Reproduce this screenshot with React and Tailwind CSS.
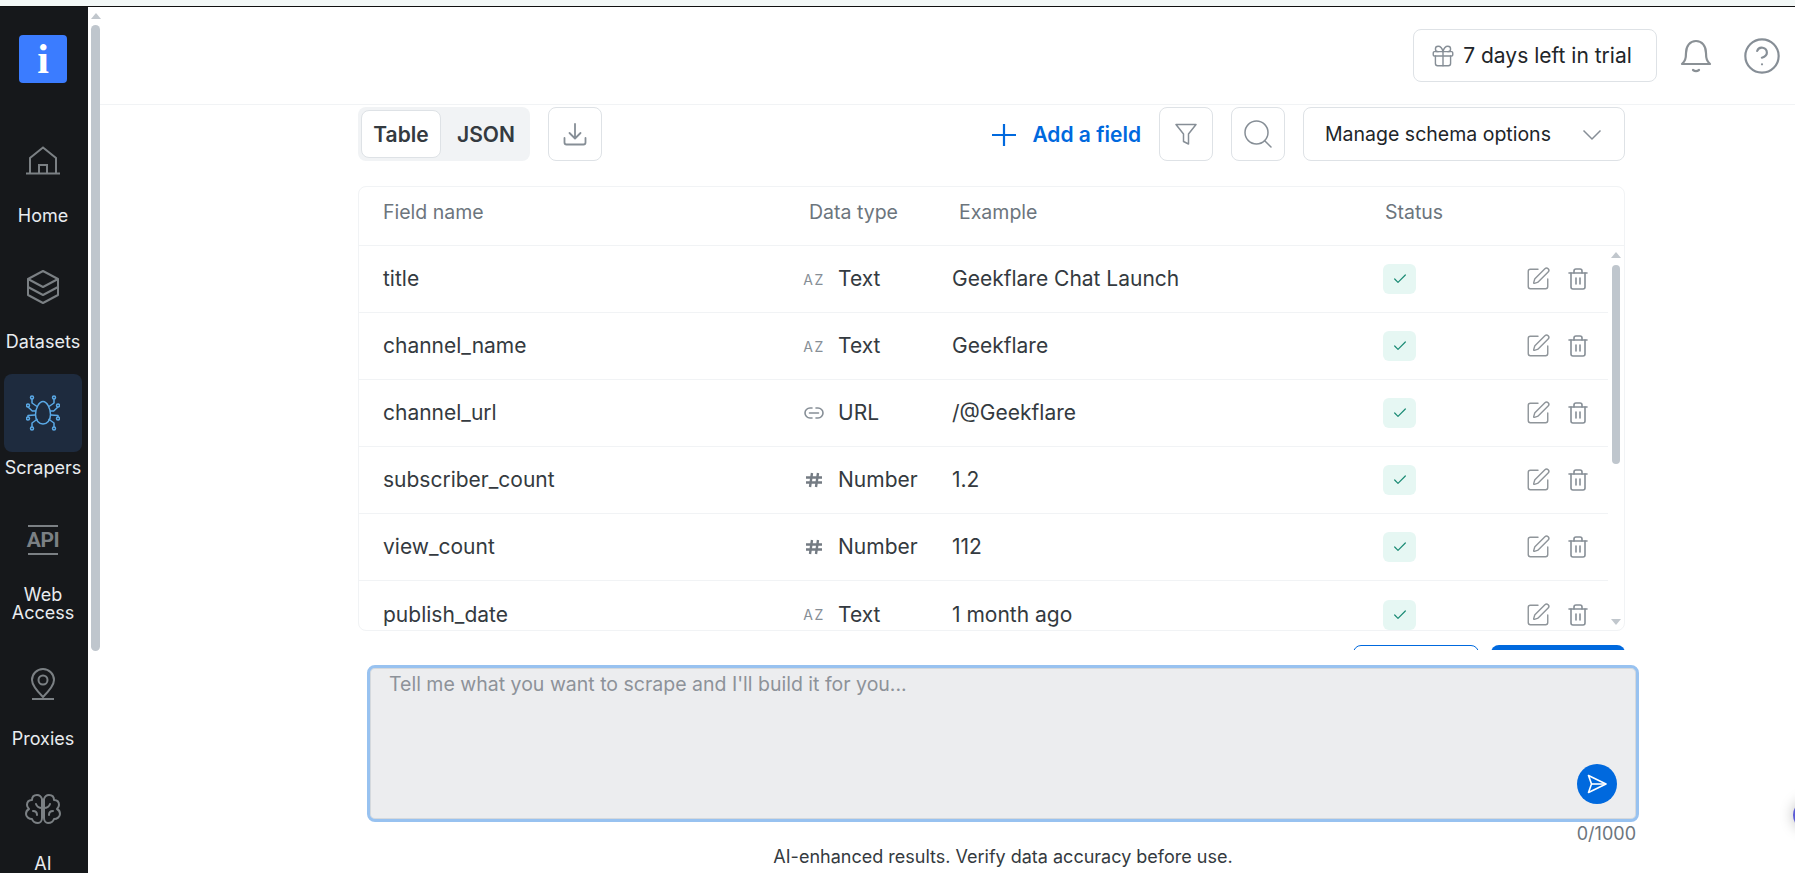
import { Gift, CircleHelp, SquarePen, Trash2, Check } from "lucide-react";

const rows = [
  { name: "title", type: "Text", kind: "az", example: "Geekflare Chat Launch" },
  { name: "channel_name", type: "Text", kind: "az", example: "Geekflare" },
  { name: "channel_url", type: "URL", kind: "url", example: "/@Geekflare" },
  { name: "subscriber_count", type: "Number", kind: "num", example: "1.2" },
  { name: "view_count", type: "Number", kind: "num", example: "112" },
  { name: "publish_date", type: "Text", kind: "az", example: "1 month ago" },
];

const HomeIcon = () => (
  <svg width="34" height="30" viewBox="0 0 34 30" fill="none" stroke="#7b8084" strokeWidth="2">
    <path d="M4 27V12L17 1.5 30 12v15" />
    <path d="M0 27.5h34" />
    <path d="M13 27v-8h8v8" />
  </svg>
);

const DatasetsIcon = () => (
  <svg width="34" height="36" viewBox="0 0 34 36" fill="none" stroke="#7b8084" strokeWidth="2" strokeLinejoin="round">
    <path d="M17 2l15 8v16l-15 8-15-8V10z" />
    <path d="M2 10l15 8 15-8" />
    <path d="M2 18l15 8 15-8" />
  </svg>
);

const SpiderIcon = () => (
  <svg width="34" height="36" viewBox="0 0 34 36" fill="none" stroke="#5aa9e6" strokeWidth="1.5" strokeLinejoin="round">
    <path d="M17 6.5c4 0 7.5 7 7.5 13 0 6-3.5 9.5-7.5 9.5s-7.5-3.5-7.5-9.5c0-6 3.5-13 7.5-13z" />
    <path d="M6 4v4l5 3.5M28 4v4l-5 3.5" />
    <path d="M2 12l4.3 4H10M32 12l-4.3 4H24" />
    <path d="M2 22v-1.5L9 20M32 22v-1.5L25 20" />
    <path d="M6 32v-4l5.5-4M28 32v-4l-5.5-4" />
    <circle cx="6" cy="2.5" r="1.5" />
    <circle cx="28" cy="2.5" r="1.5" />
    <circle cx="2" cy="10.5" r="1.5" />
    <circle cx="32" cy="10.5" r="1.5" />
    <circle cx="2" cy="23.5" r="1.5" />
    <circle cx="32" cy="23.5" r="1.5" />
    <circle cx="6" cy="33.5" r="1.5" />
    <circle cx="28" cy="33.5" r="1.5" />
  </svg>
);

const ApiIcon = () => (
  <div className="flex h-[30px] w-[30px] items-center justify-center border-y-2 border-[#7b8084]">
    <span className="font-['Roboto',sans-serif] text-[21px] leading-none font-bold tracking-[-0.5px] text-[#7b8084]">API</span>
  </div>
);

const PinIcon = () => (
  <svg width="24" height="32" viewBox="0 0 24 32" fill="none" stroke="#7b8084" strokeWidth="2">
    <path d="M12 29C5 22 1 17 1 12a11 11 0 0 1 22 0c0 5-4 10-11 17z" />
    <circle cx="12" cy="12" r="4.5" />
    <path d="M1 31h22" />
  </svg>
);

const BrainIcon = () => (
  <svg width="36" height="30" viewBox="0 0 36 30" fill="none" stroke="#7b8084" strokeWidth="2" strokeLinecap="round" strokeLinejoin="round">
    <path d="M17 5C16 2 14 1 12 1 9 1 7 3 7 6 4 6 2 8 2 11c0 2 1 3 2 4-2 1-3 3-3 5 0 3 3 5 6 5 1 3 4 4 6 4 2 0 4-2 4-5z" />
    <path d="M19 5c1-3 3-4 5-4 3 0 5 2 5 5 3 0 5 2 5 5 0 2-1 3-2 4 2 1 3 3 3 5 0 3-3 5-6 5-1 3-4 4-6 4-2 0-4-2-4-5z" />
    <path d="M17 14c-2 0-5-1-6-4M19 14c2 0 5-1 6-4M8 17c2 0 4 1 4 4M28 17c-2 0-4 1-4 4" />
  </svg>
);

const BellIcon = () => (
  <svg width="32" height="36" viewBox="0 0 32 36" fill="none" stroke="#8a9095" strokeWidth="2.2" strokeLinecap="round" strokeLinejoin="round">
    <path d="M2 26c3-3 4-5 4-11 0-7 4-12 10-12s10 5 10 12c0 6 1 8 4 11z" />
    <path d="M13 32c2 1.5 4 1.5 6 0" />
  </svg>
);

const DownloadIcon = () => (
  <svg width="24" height="24" viewBox="0 0 24 24" fill="none" stroke="#868e96" strokeWidth="1.8" strokeLinecap="round" strokeLinejoin="round">
    <path d="M12 2v14M6.5 11l5.5 5.5 5.5-5.5" />
    <path d="M1.5 16v4.5a2 2 0 0 0 2 2h17a2 2 0 0 0 2-2V16" />
  </svg>
);

const FilterIcon = () => (
  <svg width="22" height="22" viewBox="0 0 22 22" fill="none" stroke="#868e96" strokeWidth="1.5" strokeLinejoin="round">
    <path d="M1 1.5h20l-7.5 9.5V21l-5-2.5v-7.5z" />
  </svg>
);

const SearchIcon = () => (
  <svg width="28" height="28" viewBox="0 0 28 28" fill="none" stroke="#868e96" strokeWidth="1.5" strokeLinecap="round">
    <circle cx="12.5" cy="12.5" r="11.5" />
    <path d="M21 21l6 6" />
  </svg>
);

const PlusIcon = () => (
  <svg width="24" height="24" viewBox="0 0 24 24" fill="none" stroke="#0069de" strokeWidth="2.2">
    <path d="M12 1v22M0 12h24" />
  </svg>
);

const ChevronIcon = () => (
  <svg width="20" height="12" viewBox="0 0 20 12" fill="none" stroke="#868e96" strokeWidth="1.5">
    <path d="M1.5 1.5L10 10l8.5-8.5" />
  </svg>
);

const LinkIcon = () => (
  <svg width="20" height="12" viewBox="0 0 20 12" fill="none" stroke="#868e96" strokeWidth="1.6" strokeLinecap="round">
    <path d="M8 1H6a5 5 0 0 0 0 10h2M12 1h2a5 5 0 0 1 0 10h-2M5.5 6h9" />
  </svg>
);

const HashIcon = () => (
  <svg width="18" height="16" viewBox="0 0 18 16" fill="none" stroke="#747b83" strokeWidth="2.4">
    <path d="M1 5.5h16M1 10.5h16M7 1L5 15M13 1l-2 14" />
  </svg>
);

const SendIcon = () => (
  <svg width="20" height="20" viewBox="0 0 20 20" fill="none" stroke="white" strokeWidth="1.6" strokeLinejoin="round">
    <path d="M1.5 1.5L19 10 1.5 18.5 4.5 10z" />
    <path d="M4.5 10H19" />
  </svg>
);

const TypeIcon = ({ kind }) => {
  if (kind === "az") return <span className="text-[14px] tracking-[1.5px] text-[#868e96]">AZ</span>;
  if (kind === "url") return <LinkIcon />;
  return <HashIcon />;
};

const NavItem = ({ icon, label, active, className }) => (
  <div className={`flex flex-col items-center ${className}`}>
    <div className={`flex h-[78px] w-[78px] items-center justify-center rounded-lg ${active ? "bg-[#1e2b3e]" : ""}`}>{icon}</div>
    <span className="mt-[7px] text-center text-[18px] leading-[18px] text-[#e9ecef]">{label}</span>
  </div>
);

const Sidebar = () => (
  <div className="flex h-full w-[88px] shrink-0 flex-col items-center overflow-hidden bg-[#16181b] pt-[28px] pr-[2px]">
    <div className="flex h-[48px] w-[48px] shrink-0 items-center justify-center rounded bg-[#3b7cff]">
      <span className="font-['Liberation_Serif',serif] text-[42px] leading-none font-bold text-white">i</span>
    </div>
    <NavItem icon={<HomeIcon />} label="Home" className="mt-[39px]" />
    <NavItem icon={<DatasetsIcon />} label="Datasets" className="mt-[23px]" />
    <NavItem icon={<SpiderIcon />} label="Scrapers" active className="mt-[23px]" />
    <NavItem icon={<ApiIcon />} label={<>Web<br />Access</>} className="mt-[24px]" />
    <NavItem icon={<PinIcon />} label="Proxies" className="mt-[23px]" />
    <NavItem icon={<BrainIcon />} label="AI" className="mt-[22px]" />
  </div>
);

const Row = ({ row, last }) => (
  <div className={`flex h-[67px] shrink-0 items-center text-[21px] ${last ? "" : "border-b border-[#f1f3f5]"}`}>
    <div className="w-[439px] pl-[24px] text-[#343a40]">{row.name}</div>
    <div className="mr-[8px] flex w-[32px] justify-center"><TypeIcon kind={row.kind} /></div>
    <div className="w-[114px] text-[#343a40]">{row.type}</div>
    <div className="w-[431px] text-[#343a40]">{row.example}</div>
    <div className="flex h-[30px] w-[33px] items-center justify-center rounded-md bg-[#e6f7f3]">
      <Check size={16} strokeWidth={1.8} color="#1a8a74" />
    </div>
    <div className="ml-[109px] flex items-center gap-[15px]">
      <SquarePen size={26} strokeWidth={1.3} color="#8f959a" />
      <Trash2 size={24} strokeWidth={1.6} color="#868e96" />
    </div>
  </div>
);

export default function App() {
  return (
    <div className="relative flex h-screen w-full flex-col overflow-hidden bg-white font-['Inter',sans-serif] text-[18px]">
      <div className="h-[6px] shrink-0 bg-[#f3f8f7]" />
      <div className="h-[1px] shrink-0 bg-[#111]" />
      <div className="flex min-h-0 flex-1">
        <Sidebar />

        {/* page scrollbar */}
        <div className="flex w-[12px] shrink-0 flex-col items-center pl-[3px] pt-[6px]">
          <div className="h-0 w-0 border-x-[5px] border-b-[6px] border-x-transparent border-b-[#c1c7cd]" />
          <div className="mt-[6px] h-[626px] w-[9px] rounded-full bg-[#bfc6cd]" />
        </div>

        <div className="flex min-w-0 flex-1 flex-col">
          <header className="flex h-[98px] shrink-0 items-center justify-end border-b border-[#f1f3f5] pr-[13px]">
            <div className="flex h-[53px] w-[244px] items-center justify-center gap-[7px] rounded-lg border border-[#dee2e6] pr-[8px] text-[21px] text-[#212529]">
              <Gift size={26} strokeWidth={1.3} color="#868e96" />
              7 days left in trial
            </div>
            <div className="ml-[23px] flex w-[32px] justify-center"><BellIcon /></div>
            <div className="ml-[30px]"><CircleHelp size={40} strokeWidth={1.3} color="#868e96" /></div>
          </header>

          <main className="flex flex-1 flex-col pl-[258px] pr-[170px]">
            <div className="mt-[2px] flex h-[54px] shrink-0 items-center">
              <div className="flex h-[54px] w-[172px] items-center rounded-lg bg-[#f1f3f5] p-[3px] text-[21px] font-semibold">
                <div className="flex h-[48px] w-[80px] items-center justify-center rounded-lg border border-[#dee2e6] bg-white pt-[1px] text-[#343a40]">Table</div>
                <div className="flex flex-1 items-center justify-center pt-[1px] pl-[4px] text-[#343a40]">JSON</div>
              </div>
              <div className="ml-[18px] flex h-[54px] w-[54px] items-center justify-center rounded-lg border border-[#dee2e6]"><DownloadIcon /></div>
              <div className="ml-auto flex items-center gap-[16px] pt-[1px] text-[21px] font-semibold text-[#0069de]">
                <PlusIcon />
                Add a field
              </div>
              <div className="ml-[18px] flex h-[54px] w-[54px] items-center justify-center rounded-lg border border-[#dee2e6]"><FilterIcon /></div>
              <div className="ml-[18px] flex h-[54px] w-[54px] items-center justify-center rounded-lg border border-[#dee2e6]"><SearchIcon /></div>
              <div className="ml-[18px] flex h-[54px] w-[322px] items-center justify-between rounded-lg border border-[#dee2e6] pt-[1px] pr-[22px] pl-[21px] text-[19.5px] text-[#212529]">
                Manage schema options
                <ChevronIcon />
              </div>
            </div>

            <div className="mt-[25px] flex h-[445px] shrink-0 flex-col overflow-hidden rounded-lg border border-[#f1f3f5]">
              <div className="flex h-[59px] shrink-0 items-center border-b border-[#f1f3f5] pb-[7px] text-[19.5px] text-[#6c757d]">
                <div className="w-[450px] pl-[24px]">Field name</div>
                <div className="w-[150px]">Data type</div>
                <div className="w-[426px]">Example</div>
                <div>Status</div>
              </div>
              <div className="flex min-h-0 flex-1">
                <div className="min-w-0 flex-1">
                  {rows.map((row, i) => (
                    <Row key={row.name} row={row} last={i === rows.length - 1} />
                  ))}
                </div>
                <div className="flex w-[16px] shrink-0 flex-col items-center pt-[6px] pb-[5px]">
                  <div className="h-0 w-0 border-x-[5px] border-b-[6px] border-x-transparent border-b-[#c1c7cd]" />
                  <div className="mt-[7px] h-[199px] w-[8px] rounded-full bg-[#bfc6cd]" />
                  <div className="mt-auto h-0 w-0 border-x-[5px] border-t-[6px] border-x-transparent border-t-[#c1c7cd]" />
                </div>
              </div>
            </div>

            {/* buttons cut off by the chat box */}
            <div className="mt-[14px] flex h-[5px] shrink-0 justify-end gap-[12px] overflow-hidden">
              <div className="h-[40px] w-[126px] rounded-lg border border-[#0069de]" />
              <div className="h-[40px] w-[134px] rounded-lg bg-[#0069de]" />
            </div>

            <div className="-mr-[14px] ml-[9px] mt-[15px] flex h-[157px] shrink-0 flex-col justify-between rounded-lg border-[3px] border-[#98c2f0] bg-[#ecedef] pr-[19px] pb-[15px] pl-[19px] pt-[2px] text-[19.5px] shadow-[inset_0_0_0_1px_#d5d9dd]">
              <div className="text-[#8d9299]">Tell me what you want to scrape and I'll build it for you...</div>
              <div className="flex h-[40px] w-[40px] items-center justify-center self-end rounded-full bg-[#0069de]"><SendIcon /></div>
            </div>
            <div className="-mr-[11px] text-right leading-[23px] text-[#6c757d]">0/1000</div>
            <div className="-mr-[14px] ml-[9px] text-center leading-[24px] text-[#343a40]">AI-enhanced results. Verify data accuracy before use.</div>
          </main>
        </div>
      </div>

      {/* chat widget peeking from the right edge */}
      <div className="absolute top-[800px] right-[-28px] h-[30px] w-[30px] rounded-full bg-[#5b5bd6] shadow-[0_0_14px_rgba(0,0,0,0.25)]" />
    </div>
  );
}
